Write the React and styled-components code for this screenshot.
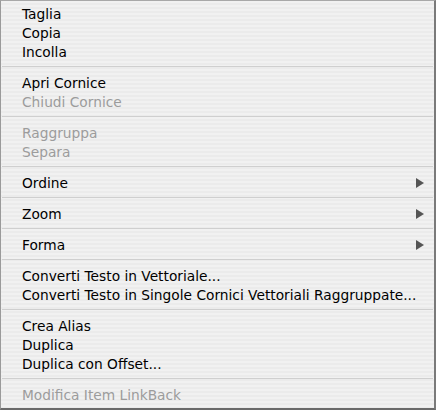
import styled, { createGlobalStyle } from "styled-components";

const GlobalStyle = createGlobalStyle`
  html, body {
    margin: 0;
    padding: 0;
    background: #ffffff;
  }
`;

//Menu data
const groups = [
  [{ label: "Taglia" }, { label: "Copia" }, { label: "Incolla" }],
  [{ label: "Apri Cornice" }, { label: "Chiudi Cornice", disabled: true }],
  [
    { label: "Raggruppa", disabled: true },
    { label: "Separa", disabled: true },
  ],
  [{ label: "Ordine", submenu: true }],
  [{ label: "Zoom", submenu: true }],
  [{ label: "Forma", submenu: true }],
  [
    { label: "Converti Testo in Vettoriale..." },
    { label: "Converti Testo in Singole Cornici Vettoriali Raggruppate..." },
  ],
  [
    { label: "Crea Alias" },
    { label: "Duplica" },
    { label: "Duplica con Offset..." },
  ],
  [{ label: "Modifica Item LinkBack", disabled: true }],
];

const Arrow = () => (
  <svg width="8" height="10" viewBox="0 0 8 10">
    <polygon points="0,0 8,5 0,10" fill="#555555" />
  </svg>
);

const App = () => {
  return (
    <>
      <GlobalStyle />
      <Menu>
        {groups.map((group, i) => (
          <Group key={i} $last={i === groups.length - 1}>
            {group.map((item) => (
              <Item key={item.label} $disabled={item.disabled}>
                <span>{item.label}</span>
                {item.submenu && <Arrow />}
              </Item>
            ))}
          </Group>
        ))}
      </Menu>
    </>
  );
};

const Menu = styled.div`
  width: 436px;
  height: 410px;
  box-sizing: border-box;
  padding: 3px 0 6px;
  border-top: 1px solid #a8a8a8;
  border-left: 1px solid #9a9a9a;
  border-right: 2px solid #7a7a7a;
  border-bottom: 2px solid #6a6a6a;
  background: repeating-linear-gradient(
    to bottom,
    #f1f1f1 0px,
    #f1f1f1 2px,
    #ebebeb 2px,
    #ebebeb 4px
  );
  font-family: "DejaVu Sans", Verdana, sans-serif;
  font-size: 13.75px;
  display: flex;
  flex-direction: column;
`;

const Group = styled.div`
  display: flex;
  flex-direction: column;
  border-bottom: ${(p) => (p.$last ? "none" : "1px solid #cfcfcf")};
  padding-bottom: ${(p) => (p.$last ? "0" : "5px")};
  margin-bottom: ${(p) => (p.$last ? "0" : "6px")};
  margin-left: 1px;
  margin-right: 1px;
`;

const Item = styled.div`
  height: 19px;
  display: flex;
  align-items: center;
  justify-content: space-between;
  padding: 0 9px 0 20px;
  color: ${(p) => (p.$disabled ? "#9c9c9c" : "#000000")};
  white-space: nowrap;
`;

export default App;
